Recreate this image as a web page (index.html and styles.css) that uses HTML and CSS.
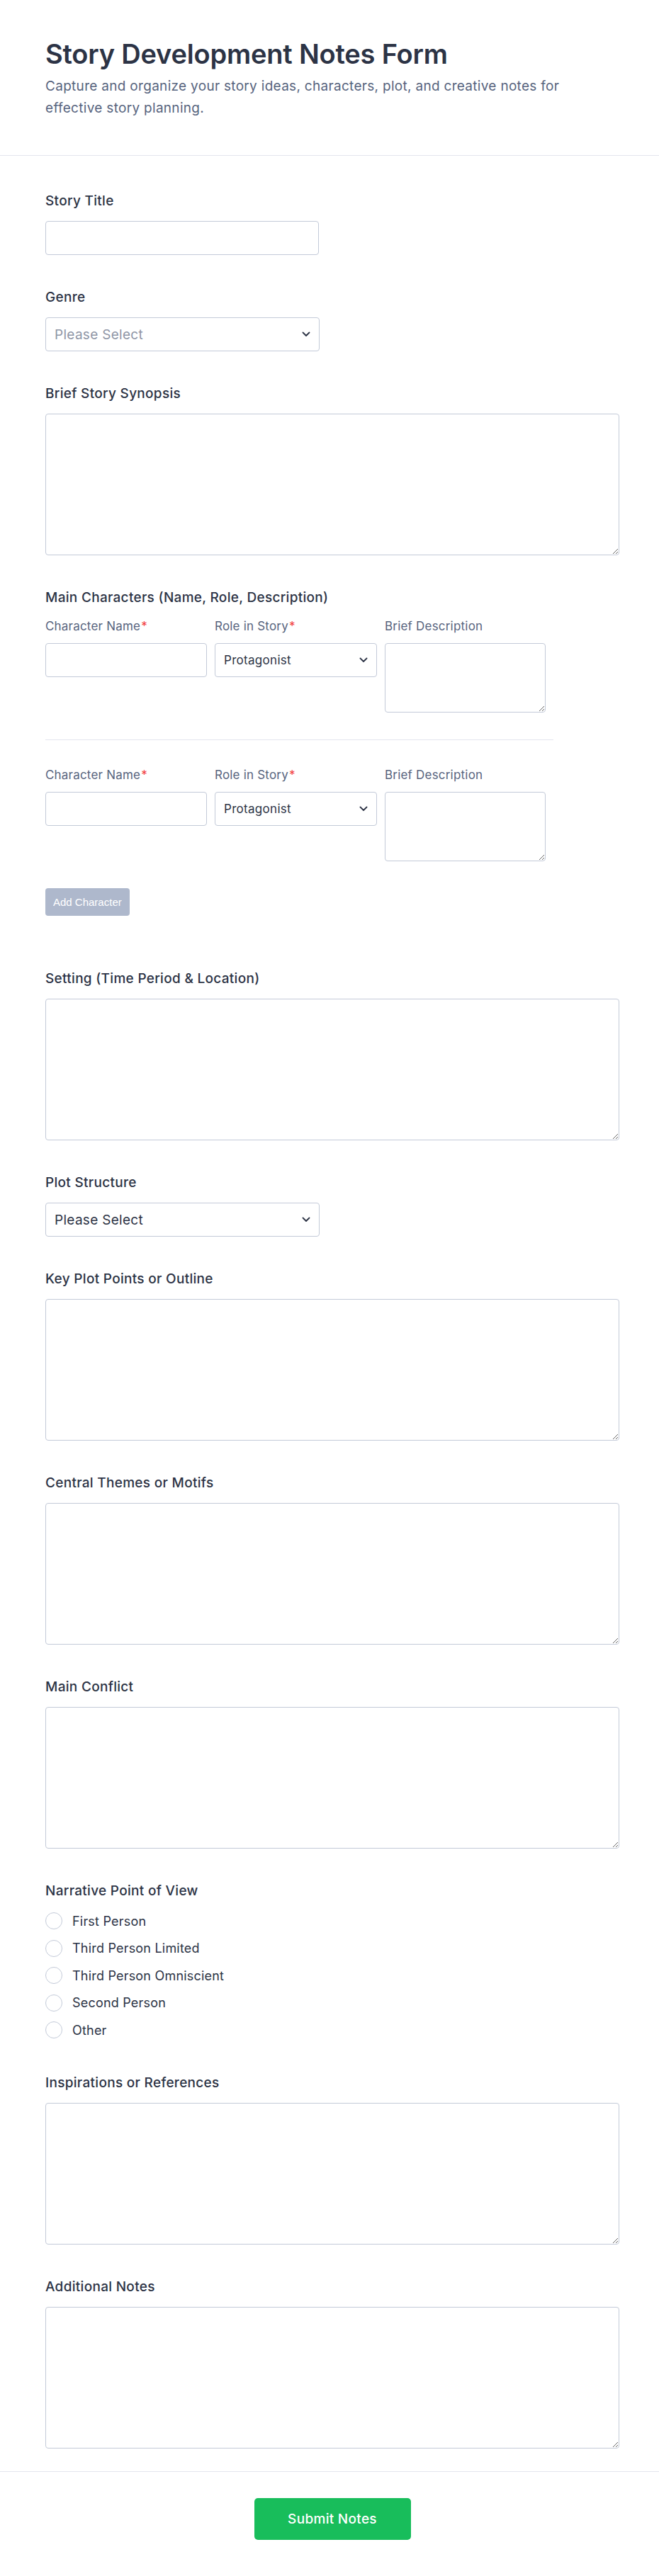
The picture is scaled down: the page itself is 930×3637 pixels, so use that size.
FILE: index.html
```html
<!DOCTYPE html>
<html lang="en">
<head>
<meta charset="utf-8">
<title>Story Development Notes Form</title>
<link rel="stylesheet" href="styles.css">
</head>
<body>
<div class="page">
  <header class="header">
    <h1 class="title">Story Development Notes Form</h1>
    <p class="subtitle">Capture and organize your story ideas, characters, plot, and creative notes for effective story planning.</p>
  </header>

  <form class="form">
    <div class="field">
      <label class="label">Story Title</label>
      <input class="input input-half" type="text">
    </div>

    <div class="field">
      <label class="label">Genre</label>
      <div class="select-wrap select-half">
        <select class="select placeholder"><option>Please Select</option></select>
        <svg class="chev" width="12" height="8" viewBox="0 0 12 8"><path d="M1.5 1.5 L6 6 L10.5 1.5" fill="none" stroke="#2c3345" stroke-width="1.8" stroke-linecap="round" stroke-linejoin="round"/></svg>
      </div>
    </div>

    <div class="field">
      <label class="label">Brief Story Synopsis</label>
      <textarea class="textarea"></textarea>
    </div>

    <div class="field field-chars">
      <label class="label">Main Characters (Name, Role, Description)</label>
      <div class="chars">
        <div class="char-row">
          <div class="cell">
            <span class="sublabel">Character Name<span class="req">*</span></span>
            <input class="input" type="text">
          </div>
          <div class="cell">
            <span class="sublabel">Role in Story<span class="req">*</span></span>
            <div class="select-wrap">
              <select class="select select-small"><option>Protagonist</option></select>
              <svg class="chev" width="12" height="8" viewBox="0 0 12 8"><path d="M1.5 1.5 L6 6 L10.5 1.5" fill="none" stroke="#2c3345" stroke-width="1.8" stroke-linecap="round" stroke-linejoin="round"/></svg>
            </div>
          </div>
          <div class="cell">
            <span class="sublabel">Brief Description</span>
            <textarea class="textarea textarea-small"></textarea>
          </div>
        </div>
        <div class="char-row char-row-next">
          <div class="cell">
            <span class="sublabel">Character Name<span class="req">*</span></span>
            <input class="input" type="text">
          </div>
          <div class="cell">
            <span class="sublabel">Role in Story<span class="req">*</span></span>
            <div class="select-wrap">
              <select class="select select-small"><option>Protagonist</option></select>
              <svg class="chev" width="12" height="8" viewBox="0 0 12 8"><path d="M1.5 1.5 L6 6 L10.5 1.5" fill="none" stroke="#2c3345" stroke-width="1.8" stroke-linecap="round" stroke-linejoin="round"/></svg>
            </div>
          </div>
          <div class="cell">
            <span class="sublabel">Brief Description</span>
            <textarea class="textarea textarea-small"></textarea>
          </div>
        </div>
      </div>
      <button type="button" class="add-btn">Add Character</button>
    </div>

    <div class="field">
      <label class="label">Setting (Time Period &amp; Location)</label>
      <textarea class="textarea"></textarea>
    </div>

    <div class="field">
      <label class="label">Plot Structure</label>
      <div class="select-wrap select-half">
        <select class="select"><option>Please Select</option></select>
        <svg class="chev" width="12" height="8" viewBox="0 0 12 8"><path d="M1.5 1.5 L6 6 L10.5 1.5" fill="none" stroke="#2c3345" stroke-width="1.8" stroke-linecap="round" stroke-linejoin="round"/></svg>
      </div>
    </div>

    <div class="field">
      <label class="label">Key Plot Points or Outline</label>
      <textarea class="textarea"></textarea>
    </div>

    <div class="field">
      <label class="label">Central Themes or Motifs</label>
      <textarea class="textarea"></textarea>
    </div>

    <div class="field">
      <label class="label">Main Conflict</label>
      <textarea class="textarea"></textarea>
    </div>

    <div class="field field-radios">
      <label class="label">Narrative Point of View</label>
      <div class="radios">
        <label class="radio"><input type="radio" name="pov"><span>First Person</span></label>
        <label class="radio"><input type="radio" name="pov"><span>Third Person Limited</span></label>
        <label class="radio"><input type="radio" name="pov"><span>Third Person Omniscient</span></label>
        <label class="radio"><input type="radio" name="pov"><span>Second Person</span></label>
        <label class="radio"><input type="radio" name="pov"><span>Other</span></label>
      </div>
    </div>

    <div class="field">
      <label class="label">Inspirations or References</label>
      <textarea class="textarea"></textarea>
    </div>

    <div class="field field-last">
      <label class="label">Additional Notes</label>
      <textarea class="textarea"></textarea>
    </div>
  </form>

  <footer class="footer">
    <button type="button" class="submit">Submit Notes</button>
  </footer>
</div>
</body>
</html>
```

FILE: styles.css
```css
* { box-sizing: border-box; }

html, body {
  margin: 0;
  padding: 0;
  background: #ffffff;
}

body {
  font-family: Inter, "Noto Sans", "Liberation Sans", sans-serif;
  color: #2c3345;
}

.page {
  width: 930px;
}

.header {
  padding: 53px 56px 51px 64px;
  border-bottom: 1px solid #e3e6ee;
}

.title {
  margin: 0;
  font-size: 38px;
  line-height: 46px;
  font-weight: 600;
  color: #2c3345;
  letter-spacing: -0.2px;
}

.subtitle {
  margin: 7px 0 0;
  font-size: 19px;
  line-height: 31px;
  letter-spacing: 0.3px;
  color: #57647e;
}

.form {
  display: flex;
  flex-direction: column;
  padding: 52px 56px 0 64px;
}

.field {
  display: flex;
  flex-direction: column;
  align-items: flex-start;
  margin-bottom: 48px;
}

.field-chars { margin-bottom: 77px; }
.field-radios { margin-bottom: 43px; }
.field-last { margin-bottom: 32px; }

.label {
  display: block;
  font-size: 19px;
  line-height: 24px;
  font-weight: 500;
  letter-spacing: 0.3px;
  color: #2c3345;
  margin-bottom: 16px;
}

.input,
.select,
.textarea {
  font-family: inherit;
  border: 1px solid #c3cad8;
  border-radius: 4px;
  background: #fff;
  color: #2c3345;
  outline: none;
}

.input {
  width: 100%;
  height: 48px;
  padding: 0 12px;
  font-size: 16px;
}

.input-half { width: 386px; }

.select-wrap {
  position: relative;
  width: 100%;
}

.select-half { width: 387px; }

.select {
  width: 100%;
  height: 48px;
  padding: 0 36px 0 12px;
  font-size: 19px;
  letter-spacing: 0.3px;
  appearance: none;
  -webkit-appearance: none;
}

.select-small {
  font-size: 17px;
}

.select.placeholder { color: #8f96a6; }

.chev {
  position: absolute;
  right: 13px;
  top: 20px;
  pointer-events: none;
}

.textarea {
  display: block;
  width: 810px;
  height: 200px;
  padding: 10px 12px;
  font-size: 16px;
  resize: vertical;
}

/* characters */
.chars {
  width: 717px;
  margin-top: 2px;
}

.char-row {
  display: grid;
  grid-template-columns: 228px 229px 227px;
  column-gap: 11px;
  align-items: start;
}

.char-row-next {
  margin-top: 38px;
  padding-top: 39px;
  border-top: 1px solid #e3e6ee;
}

.cell {
  display: flex;
  flex-direction: column;
}

.sublabel {
  font-size: 17px;
  line-height: 20px;
  letter-spacing: 0.2px;
  color: #57647e;
  margin-bottom: 14px;
  white-space: nowrap;
}

.req {
  color: #f23a3c;
  margin-left: 1px;
}

.textarea-small {
  width: 227px;
  height: 98px;
}

.add-btn {
  margin-top: 38px;
  height: 39px;
  padding: 0 11px;
  border: none;
  border-radius: 4px;
  background: #aeb8cc;
  color: #ffffff;
  font-family: "Liberation Sans", Arial, sans-serif;
  font-size: 15px;
}

/* radios */
.radios {
  display: flex;
  flex-direction: column;
  margin-top: -5px;
}

.radio {
  display: flex;
  align-items: center;
  height: 38.5px;
  font-size: 18px;
  letter-spacing: 0.2px;
  color: #2c3345;
}

.radio input {
  appearance: none;
  -webkit-appearance: none;
  width: 24px;
  height: 24px;
  margin: 0 14px 0 0;
  border: 1.5px solid #c3cad8;
  border-radius: 50%;
  background: #fff;
}

/* footer */
.footer {
  border-top: 1px solid #e3e6ee;
  padding: 37px 56px 50px 64px;
  display: flex;
  justify-content: center;
}

.submit {
  width: 221px;
  height: 59px;
  border: none;
  border-radius: 5px;
  background: #18bd5b;
  color: #ffffff;
  font-family: Inter, "Liberation Sans", sans-serif;
  font-size: 19px;
  letter-spacing: 0.3px;
  font-weight: 500;
}
```
